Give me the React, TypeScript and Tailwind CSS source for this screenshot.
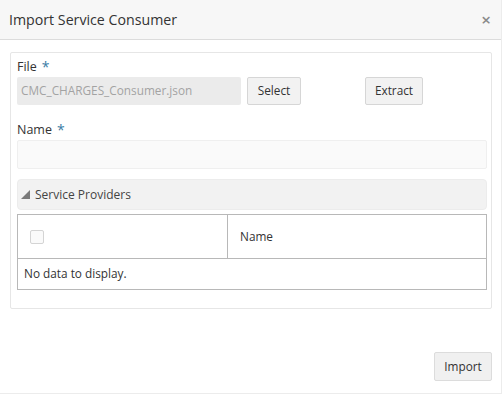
export default function App() {
  return (
    <div
      className="w-[502px] h-[394px] bg-white flex flex-col text-[#333] border-r border-b border-[#ececec]"
      style={{ fontFamily: '"Open Sans", "Noto Sans", sans-serif' }}
    >
      {/* Header */}
      <div className="h-[40px] shrink-0 bg-[#f7f7f7] border-b border-[#dcdcdc] flex items-center justify-between pl-[9px] pr-[10px]">
        <span className="text-[14.2px] text-[#333]">Import Service Consumer</span>
        <span className="text-[17px] font-semibold text-[#8a8a8a] leading-none">×</span>
      </div>

      {/* Body */}
      <div className="pl-[10px] pr-[9px] pt-[12px]">
        <div className="border border-[#e6e6e6] rounded-[2px] pl-[6px] pr-[4px] pt-[5px] pb-[18px]">
          <div className="text-[12.5px] leading-[18px] flex gap-[5px]">
            <span>File</span>
            <span className="text-[#3a7ca5] text-[14px]">*</span>
          </div>
          <div className="flex items-center mt-[1px]">
            <div className="w-[224px] h-[28px] bg-[#ebebeb] rounded-[2px] flex items-center px-[4px] text-[11.8px] text-[#a3a3a3]">
              CMC_CHARGES_Consumer.json
            </div>
            <button className="ml-[6px] w-[54px] h-[28px] bg-[#f2f2f2] border border-[#d6d6d6] rounded-[2px] text-[11.8px] text-[#333]">
              Select
            </button>
            <button className="ml-[64px] w-[58px] h-[28px] bg-[#f2f2f2] border border-[#d6d6d6] rounded-[2px] text-[11.8px] text-[#333]">
              Extract
            </button>
          </div>

          <div className="text-[12.5px] leading-[18px] flex gap-[5px] mt-[16px]">
            <span>Name</span>
            <span className="text-[#3a7ca5] text-[14px]">*</span>
          </div>
          <div className="mt-[1px] h-[29px] bg-[#fafafa] border border-[#efefef] rounded-[2px]" />

          {/* Service Providers */}
          <div className="mt-[10px] h-[31px] bg-[#f2f2f2] border border-[#ececec] rounded-[4px] flex items-center px-[3px] gap-[5px]">
            <svg width="9" height="9" viewBox="0 0 9 9">
              <polygon points="9,0 9,9 0,9" fill="#7a7a7a" />
            </svg>
            <span className="text-[12px] text-[#444]">Service Providers</span>
          </div>

          <div className="mt-[4px] border border-[#b8b8b8]">
            <div className="flex h-[44px] border-b border-[#b8b8b8]">
              <div className="w-[210px] border-r border-[#b8b8b8] flex items-center pl-[12px]">
                <div className="w-[14px] h-[14px] border border-[#d4d4d4] rounded-[2px] bg-[#fafafa]" />
              </div>
              <div className="flex-1 flex items-center pl-[12px] text-[11.8px]">Name</div>
            </div>
            <div className="h-[30px] flex items-center pl-[6px] text-[11.8px] text-[#333]">
              No data to display.
            </div>
          </div>
        </div>
      </div>

      {/* Footer */}
      <div className="flex-1 flex items-end justify-end pr-[9px] pb-[12px]">
        <button className="w-[58px] h-[29px] bg-[#f0f0f0] border border-[#dcdcdc] rounded-[2px] text-[11.8px] text-[#333]">
          Import
        </button>
      </div>
    </div>
  );
}
